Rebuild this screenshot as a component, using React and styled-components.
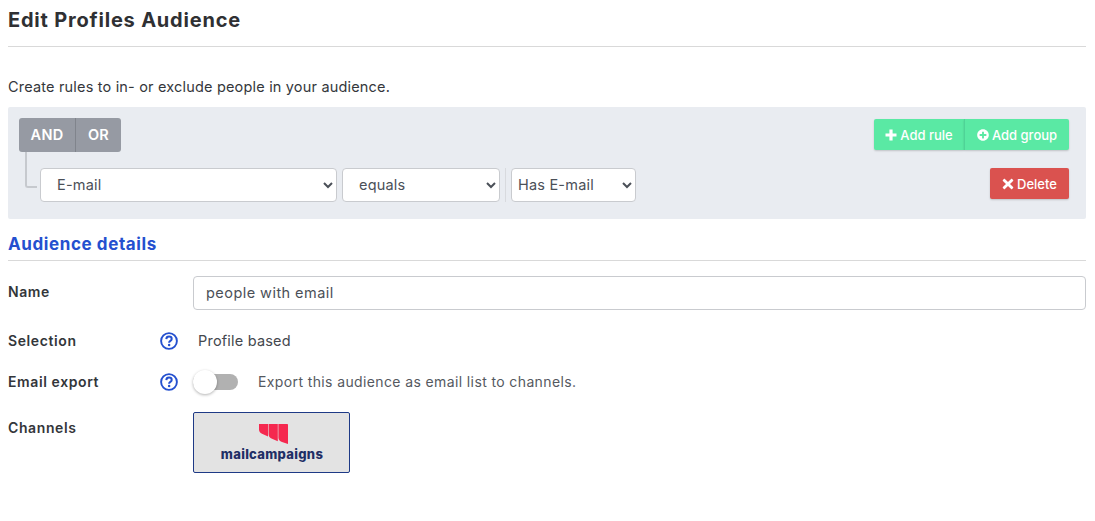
import React, { useState } from 'react';
import styled, { createGlobalStyle } from 'styled-components';
import { FaPlusCircle } from 'react-icons/fa';

const GlobalStyle = createGlobalStyle`
  html, body {
    margin: 0;
    background: #fff;
    font-family: Inter, "Open Sans", sans-serif;
    color: #3a3f44;
  }
  * { box-sizing: border-box; }
`;

const Page = styled.div`
  width: 1095px;
  height: 521px;
  padding: 0 9px 0 8px;
  overflow: hidden;
`;

const Header = styled.div`
  height: 47px;
  padding-top: 8px;
  border-bottom: 1px solid #d9d9d9;
`;

const Title = styled.h1`
  margin: 0;
  font-size: 20px;
  line-height: 24px;
  font-weight: 700;
  letter-spacing: 0.8px;
  color: #2f3033;
`;

const Intro = styled.p`
  margin: 31px 0 11px;
  font-size: 14.5px;
  line-height: 18px;
  letter-spacing: 0.18px;
  color: #34373b;
`;

const Builder = styled.div`
  height: 112px;
  padding: 11px 17px 0 11px;
  background: #e9ecf1;
  border-radius: 2px;
`;

const BuilderTop = styled.div`
  display: flex;
  justify-content: space-between;
`;

const Group = styled.div`
  display: flex;
  height: 31px;
  margin-top: ${p => p.$top || 0}px;
`;

const Conjunction = styled.button`
  width: ${p => p.$width}px;
  height: 34px;
  padding: 0 0 2px;
  border: 0;
  border-right: ${p => (p.$first ? '1px solid #80848c' : '0')};
  border-radius: ${p => (p.$first ? '3px 0 0 3px' : '0 3px 3px 0')};
  background: #969aa3;
  color: #fff;
  font: 600 14.5px Inter, sans-serif;
  letter-spacing: 0.3px;
`;

const ActionButton = styled.button`
  display: flex;
  align-items: center;
  justify-content: center;
  gap: 3px;
  width: ${p => p.$width}px;
  height: 31px;
  padding: 0;
  border: 0;
  border-left: ${p => (p.$joined ? '1px solid #4fd397' : '0')};
  border-radius: ${p => p.$radius || '2px'};
  background: ${p => p.$bg};
  box-shadow: 0 1px 2px rgba(0, 0, 0, 0.18);
  color: #fff;
  font: 500 13px Inter, sans-serif;
  svg { font-size: 12px; }
`;

const RuleRow = styled.div`
  position: relative;
  display: flex;
  align-items: center;
  height: 34px;
  margin-top: 18px;
  padding-left: 21px;

  /* connector from the AND/OR group down to the rule */
  &::before {
    content: '';
    position: absolute;
    left: 6px;
    top: -16px;
    width: 10px;
    height: 34px;
    border-left: 2px solid #c6c9ce;
    border-bottom: 2px solid #c6c9ce;
    border-bottom-left-radius: 3px;
  }
`;

const Select = styled.select`
  width: ${p => p.$width}px;
  height: 34px;
  margin-right: ${p => p.$gap || 0}px;
  padding: 0 0 2px ${p => p.$pad}px;
  background: #fff;
  border: 1px solid #c9cbcf;
  border-radius: 4px;
  color: #4b5058;
  font: 400 14.5px Inter, sans-serif;
  letter-spacing: 0.2px;
`;

const Divider = styled.span`
  width: 1px;
  height: 34px;
  margin: 0 5px;
  background: #d8dade;
`;

const DeleteWrap = styled.div`
  align-self: flex-start;
  margin-left: auto;
`;

const SectionTitle = styled.h2`
  margin: 17px 0 0;
  height: 25px;
  border-bottom: 1px solid #d9d9d9;
  font-size: 17px;
  line-height: 16px;
  font-weight: 700;
  letter-spacing: 0.6px;
  color: #2450cf;
`;

const FormRow = styled.div`
  display: flex;
  align-items: ${p => p.$align || 'center'};
  height: ${p => p.$height}px;
  margin-top: ${p => p.$top || 0}px;
`;

const Label = styled.div`
  width: 185px;
  padding-top: ${p => p.$top || 0}px;
  margin-top: ${p => p.$lift || 0}px;
  font-size: 14px;
  font-weight: 600;
  letter-spacing: 0.6px;
  color: #33363a;
`;

const NameInput = styled.input`
  flex: 1;
  height: 34px;
  padding: 0 12px 2px;
  border: 1px solid #c9cbcf;
  border-radius: 4px;
  color: #4b5058;
  font: 400 14.5px Inter, sans-serif;
  letter-spacing: 0.45px;
`;

const HelpSlot = styled.div`
  display: flex;
  width: 33px;
  margin-left: -33px;
  color: #2450cf;
`;

const PlainValue = styled.div`
  margin: -1px 0 0 5px;
  font-size: 14.5px;
  letter-spacing: 0.2px;
  color: #44484e;
`;

const Switch = styled.span`
  position: relative;
  width: 45px;
  height: 16px;
  border-radius: 8px;
  background: #b1b1b1;
  cursor: pointer;

  &::after {
    content: '';
    position: absolute;
    top: -4px;
    left: 0;
    width: 24px;
    height: 24px;
    border-radius: 50%;
    background: #fff;
    box-shadow: 0 1px 3px rgba(0, 0, 0, 0.3);
  }
`;

const SwitchText = styled.span`
  margin: -2px 0 0 20px;
  font-size: 14px;
  letter-spacing: 0.38px;
  color: #55595f;
`;

const ChannelCard = styled.button`
  display: flex;
  flex-direction: column;
  align-items: center;
  width: 157px;
  height: 61px;
  padding: 11px 0 0;
  background: #e3e3e3;
  border: 1px solid #1e3a86;
  border-radius: 2px;
`;

const LogoMark = styled.svg`
  display: block;
  margin-left: 3px;
`;

const ChannelName = styled.span`
  margin: 2px 0 0 1px;
  font: 800 13px/16px Inter, sans-serif;
  letter-spacing: 0.3px;
  color: #1f2f66;
`;

const HelpIcon = () => (
  <svg width="18" height="18" viewBox="0 0 18 18" fill="none">
    <circle cx="9" cy="9" r="7.9" stroke="currentColor" strokeWidth="1.9" />
    <path d="M6.3 7.1C6.4 5.5 7.6 4.6 9 4.6c1.6 0 2.7 1 2.7 2.3 0 2-2.6 1.9-2.6 3.8" stroke="currentColor" strokeWidth="2" />
    <circle cx="9.1" cy="13.1" r="1.25" fill="currentColor" />
  </svg>
);

const PlusIcon = () => (
  <svg width="12" height="12" viewBox="0 0 12 12">
    <path d="M4.4 0.5h3.2v3.9h3.9v3.2H7.6v3.9H4.4V7.6H0.5V4.4h3.9z" fill="currentColor" />
  </svg>
);

const CrossIcon = () => (
  <svg width="12" height="12" viewBox="0 0 12 12">
    <path d="M2.9 0.9L6 4l3.1-3.1c.3-.3.7-.3 1 0l1 1c.3.3.3.7 0 1L8 6l3.1 3.1c.3.3.3.7 0 1l-1 1c-.3.3-.7.3-1 0L6 8l-3.1 3.1c-.3.3-.7.3-1 0l-1-1c-.3-.3-.3-.7 0-1L4 6 .9 2.9c-.3-.3-.3-.7 0-1l1-1c.3-.3.7-.3 1 0z" fill="currentColor" />
  </svg>
);

const MailLogo = () => (
  <LogoMark width="29" height="20" viewBox="0 0 29 20">
    <path d="M0 0h9v12.5L3 9.8C1 8.9 0 7.6 0 5.6z" fill="#f5284f" />
    <path d="M9.6 0h9.2v17.2l-5.8-2.4c-2.2-.9-3.4-2.4-3.4-4.6z" fill="#f5284f" />
    <path d="M19.4 0H28c.6 0 1 .4 1 1v19l-6-2c-2.4-.8-3.6-2.4-3.6-4.6z" fill="#f5284f" />
  </LogoMark>
);

export default function App() {
  const [rule] = useState({ field: 'E-mail', op: 'equals', value: 'Has E-mail' });
  return (
    <Page>
      <GlobalStyle />
      <Header>
        <Title>Edit Profiles Audience</Title>
      </Header>
      <Intro>Create rules to in- or exclude people in your audience.</Intro>
      <Builder>
        <BuilderTop>
          <Group>
            <Conjunction $first $width={57}>AND</Conjunction>
            <Conjunction $width={45}>OR</Conjunction>
          </Group>
          <Group $top={1}>
            <ActionButton $width={90} $bg="#5ae9a4" $radius="2px 0 0 2px"><PlusIcon />Add rule</ActionButton>
            <ActionButton $width={105} $bg="#5ae9a4" $radius="0 2px 2px 0" $joined><FaPlusCircle />Add group</ActionButton>
          </Group>
        </BuilderTop>
        <RuleRow>
          <Select $width={297} $gap={5} $pad={12} defaultValue={rule.field}><option>E-mail</option></Select>
          <Select $width={158} $pad={12} defaultValue={rule.op}><option>equals</option></Select>
          <Divider />
          <Select $width={125} $pad={2} defaultValue={rule.value}><option>Has E-mail</option></Select>
          <DeleteWrap>
            <ActionButton $width={79} $bg="#da524f"><CrossIcon />Delete</ActionButton>
          </DeleteWrap>
        </RuleRow>
      </Builder>
      <SectionTitle>Audience details</SectionTitle>
      <FormRow $height={34} $top={15}>
        <Label $lift={-4}>Name</Label>
        <NameInput defaultValue="people with email" />
      </FormRow>
      <FormRow $height={18} $top={22}>
        <Label $lift={-2}>Selection</Label>
        <HelpSlot><HelpIcon /></HelpSlot>
        <PlainValue>Profile based</PlainValue>
      </FormRow>
      <FormRow $height={24} $top={20}>
        <Label $lift={-2}>Email export</Label>
        <HelpSlot><HelpIcon /></HelpSlot>
        <Switch />
        <SwitchText>Export this audience as email list to channels.</SwitchText>
      </FormRow>
      <FormRow $height={61} $top={18} $align="flex-start">
        <Label $top={7}>Channels</Label>
        <ChannelCard>
          <MailLogo />
          <ChannelName>mailcampaigns</ChannelName>
        </ChannelCard>
      </FormRow>
    </Page>
  );
}
